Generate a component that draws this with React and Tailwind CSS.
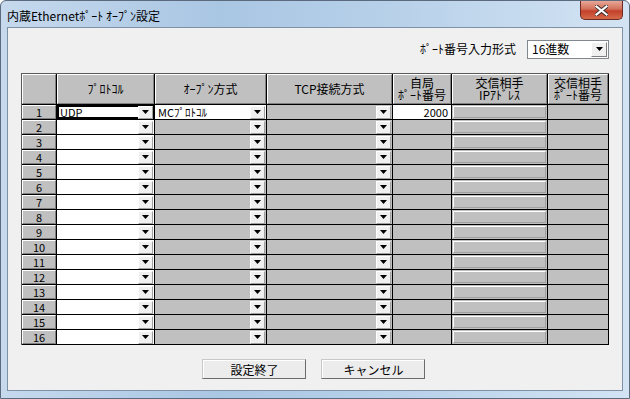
import React from "react";

const COLS = "grid-cols-[35px_98px_112px_126px_59px_96px_61px]";

const Arrow = () => (
  <svg width="7" height="4" viewBox="0 0 7 4">
    <path d="M0 0h7L3.5 4z" fill="#000" />
  </svg>
);

const DropBtn = () => (
  <div className="w-[15px] h-[13px] shrink-0 mr-px flex items-center justify-center bg-[#f0f0f0] border-t border-l border-[#ffffff] border-r border-b border-r-[#a0a0a0] border-b-[#a0a0a0]">
    <Arrow />
  </div>
);

const Raised = ({ children, className = "" }) => (
  <div
    className={`bg-[#c0c0c0] border-r border-b border-black ${className}`}
  >
    <div className="w-full h-full flex items-center justify-center border-t border-l border-white border-r border-b border-r-[#808080] border-b-[#808080]">
      {children}
    </div>
  </div>
);

const ComboCell = ({ value, white, focus }) => (
  <div
    className={`h-[15px] border-r border-b border-black flex items-center ${
      white ? "bg-white" : "bg-[#c0c0c0]"
    } ${focus ? "shadow-[inset_0_0_0_2px_#000]" : ""}`}
  >
    <span className="flex-1 pl-[3px] text-[11px] leading-[11px] whitespace-nowrap">
      {value}
    </span>
    <DropBtn />
  </div>
);

const Row = ({ n }) => {
  const first = n === 1;
  return (
    <div className={`grid ${COLS}`}>
      <Raised className="h-[15px]">
        <span className="text-[11px] leading-[11px]">{n}</span>
      </Raised>
      <ComboCell value={first ? "UDP" : ""} white focus={first} />
      <ComboCell value={first ? "MCﾌﾟﾛﾄｺﾙ" : ""} white={first} />
      <ComboCell value="" />
      <div
        className={`h-[15px] border-r border-b border-black flex items-center justify-end pr-[3px] text-[11px] leading-[11px] ${
          first ? "bg-white" : "bg-[#c0c0c0]"
        }`}
      >
        {first ? "2000" : ""}
      </div>
      <div className="h-[15px] border-r border-b border-black bg-[#c0c0c0] p-px">
        <div className="w-full h-full border-t border-l border-white border-r border-b border-r-[#a0a0a0] border-b-[#a0a0a0]" />
      </div>
      <div className="h-[15px] border-r border-b border-black bg-[#c0c0c0]" />
    </div>
  );
};

const headers = [
  "",
  "ﾌﾟﾛﾄｺﾙ",
  "ｵｰﾌﾟﾝ方式",
  "TCP接続方式",
  "自局\nﾎﾟｰﾄ番号",
  "交信相手\nIPｱﾄﾞﾚｽ",
  "交信相手\nﾎﾟｰﾄ番号",
];

const Button = ({ children }) => (
  <div className="w-[104px] h-[20px] bg-[#ececec] border border-[#c8c8c8] border-r-[#6b6b6b] border-b-[#6b6b6b] flex items-center justify-center">
    <div className="w-full h-full flex items-center justify-center border-t border-l border-white leading-none">
      {children}
    </div>
  </div>
);

export default function App() {
  return (
    <div className="w-[630px] h-[399px] flex flex-col rounded-t-[6px] border border-[#5b6b7d] bg-[linear-gradient(90deg,#c6d9ed_0%,#a9c6e3_35%,#b9d2ea_65%,#d3e3f3_100%)] font-['Noto_Sans_CJK_JP',sans-serif] text-[12px] text-black relative overflow-hidden">
      <div className="h-[26px] shrink-0 flex items-center pl-[6px] pt-[4px]">
        <span className="leading-none">内蔵Ethernetﾎﾟｰﾄ ｵｰﾌﾟﾝ設定</span>
      </div>
      <div className="absolute top-0 right-[6px] w-[43px] h-[19px] rounded-b-[5px] border border-t-0 border-[#6e2a22] bg-[linear-gradient(180deg,#e8a697_0%,#d2705a_45%,#c4402a_55%,#d46a4a_100%)] flex items-center justify-center">
        <svg width="13" height="11" viewBox="0 0 13 11">
          <path
            d="M1.5 1.5L11.5 9.5M11.5 1.5L1.5 9.5"
            stroke="#3a2a2a"
            strokeWidth="4"
            strokeLinecap="square"
          />
          <path
            d="M1.5 1.5L11.5 9.5M11.5 1.5L1.5 9.5"
            stroke="#ffffff"
            strokeWidth="2.2"
            strokeLinecap="square"
          />
        </svg>
      </div>
      <div className="mx-[6px] mb-[7px] flex-1 bg-[#f0f0f0] border border-[#7f91a6] flex flex-col">
        <div className="flex items-center justify-end gap-[11px] pt-[11px] pr-[13px] h-[31px]">
          <span className="leading-none">ﾎﾟｰﾄ番号入力形式</span>
          <div className="w-[82px] h-[19px] bg-white border border-[#828790] flex items-center p-px">
            <span className="flex-1 pl-[3px] leading-none">16進数</span>
            <div className="w-[16px] h-[15px] flex items-center justify-center bg-[#f0f0f0] border border-white border-r-[#808080] border-b-[#808080]">
              <Arrow />
            </div>
          </div>
        </div>
        <div className="ml-[13px] mt-[14px] w-[588px] border-l border-t border-[#5a5a5a]">
          <div className={`grid ${COLS}`}>
            {headers.map((h, i) => (
              <Raised key={i} className="h-[31px]">
                <span className="whitespace-pre-line text-center leading-[12px]">
                  {h}
                </span>
              </Raised>
            ))}
          </div>
          {Array.from({ length: 16 }, (_, i) => (
            <Row key={i} n={i + 1} />
          ))}
        </div>
        <div className="flex justify-center gap-[15px] mt-[14px] pr-[3px]">
          <Button>設定終了</Button>
          <Button>キャンセル</Button>
        </div>
      </div>
    </div>
  );
}
